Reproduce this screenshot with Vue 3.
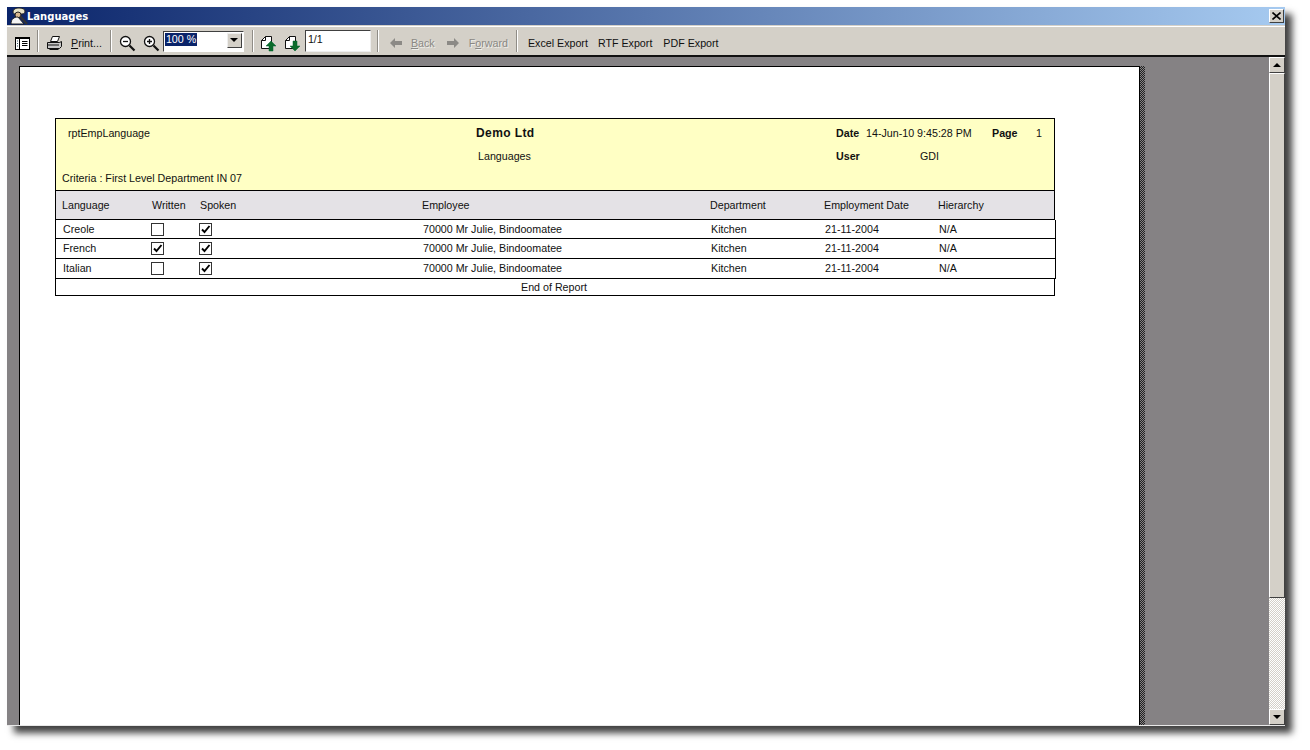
<template>
  <div class="screen">
    <div class="window">
      <div class="titlebar">
        <svg class="app-icon" width="18" height="18" viewBox="0 0 18 18">
          <path d="M9 1c-3 0-6 1-6 4 0 1 1 2 2 2h7c2 0 3-1 3-3 0-2-3-3-6-3z" fill="#e8e4c8" stroke="#222" />
          <circle cx="8" cy="8" r="3" fill="#d8b890" stroke="#222" />
          <path d="M1 17c0-5 3-7 7-7l6 7z" fill="#f4f4f4" stroke="#222" />
          <path d="M10 9l7 8" stroke="#333" stroke-width="2" />
        </svg>
        <span class="title">Languages</span>
        <button class="close">
          <svg width="9" height="8" viewBox="0 0 9 8"><path d="M0.5 0.5l8 7M8.5 0.5l-8 7" stroke="#000" stroke-width="1.6" /></svg>
        </button>
      </div>

      <div class="toolbar">
        <svg class="low i-tree" width="15" height="15" viewBox="0 0 15 15">
          <rect x="0.5" y="1.5" width="14" height="12" fill="#fff" stroke="#000" />
          <path d="M1 2h13" stroke="#000" stroke-width="2" />
          <path d="M4.500 2v11" stroke="#000" />
          <path d="M2 5h1M2 7.500h1M2 10h1" stroke="#356" />
          <path d="M7 5.500h5.500M7 7.500h5.500M7 9.500h5.500" stroke="#000" />
        </svg>
        <span class="sep s1"></span>
        <svg class="low i-print" width="17" height="16" viewBox="0 0 17 16">
          <path d="M4.500 6.500l2-5h7l-2 5z" fill="#fff" stroke="#111" />
          <path d="M1.500 7.500h12l2-1v5l-2 2h-12z" fill="#c8c8c8" stroke="#111" />
          <path d="M2 10h11M3.500 14.500h9" stroke="#111" />
        </svg>
        <span class="low btn-text print"><u>P</u>rint...</span>
        <span class="sep s2"></span>
        <svg class="low i-zoom1" width="17" height="17" viewBox="0 0 17 17">
          <circle cx="6.500" cy="6.500" r="5" fill="#fff" stroke="#111" stroke-width="1.300" />
          <path d="M4 6.500h5" stroke="#111" stroke-width="1.300" />
          <path d="M10.500 10.500l5 5" stroke="#111" stroke-width="2.200" />
        </svg>
        <svg class="low i-zoom2" width="17" height="17" viewBox="0 0 17 17">
          <circle cx="6.500" cy="6.500" r="5" fill="#fff" stroke="#111" stroke-width="1.300" />
          <path d="M4 6.500h5M6.500 4v5" stroke="#111" stroke-width="1.300" />
          <path d="M10.500 10.500l5 5" stroke="#111" stroke-width="2.200" />
        </svg>
        <div class="combo">
          <span class="combo-value">100 %</span>
          <span class="combo-btn"><i class="tri-down"></i></span>
        </div>
        <span class="sep s3"></span>
        <svg class="low i-up" width="17" height="17" viewBox="0 0 17 17">
          <path d="M1.500 5.500l4-4h6v12h-10z" fill="#fff" stroke="#111" />
          <path d="M1.500 5.500h4v-4" fill="none" stroke="#111" />
          <path d="M11 6l5 5h-3v5h-4v-5h-3z" fill="#0b6b2b" stroke="#063" stroke-width="0.500" />
        </svg>
        <svg class="low i-down" width="17" height="17" viewBox="0 0 17 17">
          <path d="M1.500 5.500l4-4h6v12h-10z" fill="#fff" stroke="#111" />
          <path d="M1.500 5.500h4v-4" fill="none" stroke="#111" />
          <path d="M11 16l5-5h-3v-5h-4v5h-3z" fill="#0b6b2b" stroke="#063" stroke-width="0.500" />
        </svg>
        <div class="page-box">1/1</div>
        <span class="sep s4"></span>
        <svg class="low i-back" width="12" height="10" viewBox="0 0 12 10"><path d="M0 5l5-5v3h7v4h-7v3z" fill="#8c8a86" /></svg>
        <span class="low btn-text off back"><u>B</u>ack</span>
        <svg class="low i-fwd" width="12" height="10" viewBox="0 0 12 10"><path d="M12 5l-5-5v3h-7v4h7v3z" fill="#8c8a86" /></svg>
        <span class="low btn-text off fwd">F<u>o</u>rward</span>
        <span class="sep s5"></span>
        <span class="low btn-text excel">Excel Export</span>
        <span class="low btn-text rtf">RTF Export</span>
        <span class="low btn-text pdf">PDF Export</span>
      </div>

      <div class="workspace">
        <div class="viewer">
          <div class="page">
            <div class="report">
              <div class="report-head">
                <span class="h-name">rptEmpLanguage</span>
                <b class="h-company">Demo Ltd</b>
                <b class="h-date-l">Date</b>
                <span class="h-date">14-Jun-10 9:45:28 PM</span>
                <b class="h-page-l">Page</b>
                <span class="h-page">1</span>
                <span class="h-title">Languages</span>
                <b class="h-user-l">User</b>
                <span class="h-user">GDI</span>
                <span class="h-criteria">Criteria : First Level Department IN 07</span>
              </div>
              <div class="cols caption">
                <span>Language</span>
                <span>Written</span>
                <span>Spoken</span>
                <span>Employee</span>
                <span>Department</span>
                <span>Employment Date</span>
                <span>Hierarchy</span>
              </div>
              <div v-for="row in rows" :key="row.lang" class="cols row" :class="row.cls">
                <span class="txt">{{ row.lang }}</span>
                <span><i class="check"><svg v-if="row.written" width="11" height="11" viewBox="0 0 11 11"><path d="M2 5.500l2.500 2.500 5-6" fill="none" stroke="#000" stroke-width="1.900" /></svg></i></span>
                <span><i class="check"><svg v-if="row.spoken" width="11" height="11" viewBox="0 0 11 11"><path d="M2 5.500l2.500 2.500 5-6" fill="none" stroke="#000" stroke-width="1.900" /></svg></i></span>
                <span class="txt">70000 Mr Julie, Bindoomatee</span>
                <span class="txt">Kitchen</span>
                <span class="txt">21-11-2004</span>
                <span class="txt">N/A</span>
              </div>
              <div class="end-row">End of Report</div>
            </div>
          </div>
          <div class="page-shadow"></div>
        </div>
        <div class="scrollbar">
          <span class="sb-btn"><i class="tri-up"></i></span>
          <span class="sb-thumb"></span>
          <span class="sb-track"></span>
          <span class="sb-btn"><i class="tri-down"></i></span>
        </div>
      </div>
    </div>
  </div>
</template>

<script setup>
const rows = [
  { lang: 'Creole', written: false, spoken: true, cls: 'r1' },
  { lang: 'French', written: true, spoken: true, cls: 'r2' },
  { lang: 'Italian', written: false, spoken: true, cls: 'r3' }
]
</script>

<style>
html, body {
  margin: 0;
  background: #fff;
  overflow: hidden;
}
</style>

<style scoped>
.screen {
  width: 1310px;
  height: 750px;
  padding: 7px 0 0 7px;
  box-sizing: border-box;
  font-family: "Liberation Sans", Arial, sans-serif;
  font-size: 10.7px;
  color: #111;
}

.window {
  width: 1278px;
  height: 719px;
  display: flex;
  flex-direction: column;
  background: #d4d0c8;
  box-shadow: 7px 7px 7px rgba(0, 0, 0, 0.75);
  border-bottom: 1px solid #e8e8e8;
  box-sizing: border-box;
}

.titlebar {
  height: 18px;
  flex: none;
  display: flex;
  align-items: center;
  padding: 0 1px 0 3px;
  background: linear-gradient(90deg, #0a246a, #a6caf0);
}

.app-icon {
  flex: none;
}

.title {
  color: #fff;
  font-family: "DejaVu Sans", sans-serif;
  font-weight: bold;
  font-size: 10px;
  margin-left: -1px;
}

.close {
  margin-left: auto;
  width: 15px;
  height: 14px;
  padding: 0;
  display: flex;
  align-items: center;
  justify-content: center;
  background: #d4d0c8;
  border: 1px solid;
  border-color: #fff #404040 #404040 #fff;
}

.toolbar {
  height: 31px;
  flex: none;
  margin-top: 1px;
  display: flex;
  align-items: center;
  border-top: 1px solid #fff;
  border-bottom: 2px solid #111;
  box-sizing: border-box;
  background: #d4d0c8;
}

.toolbar svg {
  flex: none;
}

/* icons and labels sit 2px below the combo and page box */
.low {
  position: relative;
  top: 2px;
}

.sep {
  width: 1px;
  height: 22px;
  flex: none;
  background: #8f8c86;
  border-right: 1px solid #fff;
}

.btn-text {
  white-space: nowrap;
}

.btn-text.off {
  color: #8a8884;
  text-shadow: 1px 1px 0 #eeeeea;
}

.i-tree { margin-left: 8px; }
.s1 { margin-left: 7px; }
.i-print { margin-left: 7px; }
.print { margin-left: 8px; }
.s2 { margin-left: 8px; }
.i-zoom1 { margin-left: 7px; }
.i-zoom2 { margin-left: 7px; }

.combo {
  width: 81px;
  height: 21px;
  margin-left: 3px;
  flex: none;
  display: flex;
  justify-content: space-between;
  box-sizing: border-box;
  padding: 1px;
  background: #fff;
  border: 1px solid;
  border-color: #404040 #fff #fff #404040;
}

.combo-value {
  height: 13px;
  line-height: 13px;
  background: #0a246a;
  color: #fff;
  padding: 0 1px;
}

.combo-btn {
  width: 15px;
  height: 15px;
  display: flex;
  align-items: center;
  justify-content: center;
  background: #d4d0c8;
  border: 1px solid;
  border-color: #eee #404040 #404040 #eee;
  box-sizing: border-box;
}

.tri-down {
  border-left: 4px solid transparent;
  border-right: 4px solid transparent;
  border-top: 4px solid #000;
}

.tri-up {
  border-left: 4px solid transparent;
  border-right: 4px solid transparent;
  border-bottom: 4px solid #000;
}

.s3 { margin-left: 8px; }
.i-up { margin-left: 6px; }
.i-down { margin-left: 7px; }

.page-box {
  width: 66px;
  height: 22px;
  margin-left: 4px;
  flex: none;
  box-sizing: border-box;
  padding: 2px 2px;
  background: #fff;
  border: 1px solid;
  border-color: #404040 #eee #eee #404040;
}

.s4 { margin-left: 6px; }
.i-back { margin-left: 11px; }
.back { margin-left: 9px; }
.i-fwd { margin-left: 12px; }
.fwd { margin-left: 10px; }
.s5 { margin-left: 8px; }
.excel { margin-left: 10px; }
.rtf { margin-left: 10px; }
.pdf { margin-left: 11px; }

.workspace {
  flex: 1;
  min-height: 0;
  display: flex;
}

.viewer {
  flex: 1;
  min-width: 0;
  display: flex;
  align-items: flex-start;
  overflow: hidden;
  padding: 9px 0 0 12px;
  background: #858284;
}

.page {
  width: 1121px;
  height: 700px;
  flex: none;
  box-sizing: border-box;
  padding: 51px 0 0 35px;
  background: #fff;
  border: 1px solid #000;
  border-bottom: none;
}

.page-shadow {
  width: 5px;
  height: 700px;
  flex: none;
  background: repeating-conic-gradient(#222 0 25%, #858284 0 50%) 0 0 / 2px 2px;
}

.report {
  width: 1000px;
}

.report-head {
  height: 73px;
  box-sizing: border-box;
  display: grid;
  grid-template-columns: 6px 402px 32px 340px 30px 126px 44px auto;
  grid-template-rows: 27px 19px 25px;
  align-items: center;
  background: #ffffc4;
  border: 1px solid #000;
}

.report-head > * {
  white-space: nowrap;
}

.h-name { grid-column: 2; grid-row: 1; padding-left: 6px; }
.h-company { grid-column: 3 / 5; grid-row: 1; font-size: 12px; padding-left: 12px; letter-spacing: 0.400px; }
.h-date-l { grid-column: 5; grid-row: 1; }
.h-date { grid-column: 6; grid-row: 1; }
.h-page-l { grid-column: 7; grid-row: 1; }
.h-page { grid-column: 8; grid-row: 1; }
.h-title { grid-column: 3 / 5; grid-row: 2; padding-left: 14px; }
.h-user-l { grid-column: 5; grid-row: 2; }
.h-user { grid-column: 6; grid-row: 2; padding-left: 54px; }
.h-criteria { grid-column: 2 / 4; grid-row: 3; }

.cols {
  display: grid;
  align-items: center;
  box-sizing: border-box;
  white-space: nowrap;
}

.caption {
  height: 29px;
  padding-left: 6px;
  grid-template-columns: 90px 48px 222px 288px 114px 114px auto;
  background: #e4e2e6;
  border: 1px solid #000;
  border-top: none;
}

.row {
  width: 1001px;
  padding-left: 7px;
  grid-template-columns: 88px 48px 224px 288px 114px 114px auto;
  border-right: 1px solid #000;
  border-left: 1px solid #000;
  border-bottom: 1px solid #000;
}

.r1 { height: 19px; }
.r2 { height: 20px; }
.r3 { height: 20px; }

.r2 .txt,
.r3 .txt {
  margin-bottom: 2px;
}

.check {
  width: 13px;
  height: 13px;
  display: flex;
  align-items: center;
  justify-content: center;
  box-sizing: border-box;
  background: #fff;
  border: 1px solid #333;
}

.end-row {
  height: 17px;
  box-sizing: border-box;
  padding-right: 2px;
  text-align: center;
  line-height: 16px;
  border: 1px solid #000;
  border-top: none;
}

.scrollbar {
  width: 16px;
  flex: none;
  display: flex;
  flex-direction: column;
  background: repeating-conic-gradient(#d4d0c8 0 25%, #fff 0 50%) 0 0 / 2px 2px;
}

.sb-btn {
  height: 16px;
  flex: none;
  display: flex;
  align-items: center;
  justify-content: center;
  box-sizing: border-box;
  background: #d4d0c8;
  border: 1px solid;
  border-color: #fff #404040 #404040 #fff;
}

.sb-thumb {
  height: 525px;
  flex: none;
  box-sizing: border-box;
  background: #d4d0c8;
  border: 1px solid;
  border-color: #fff #404040 #404040 #fff;
}

.sb-track {
  flex: 1;
}
</style>
